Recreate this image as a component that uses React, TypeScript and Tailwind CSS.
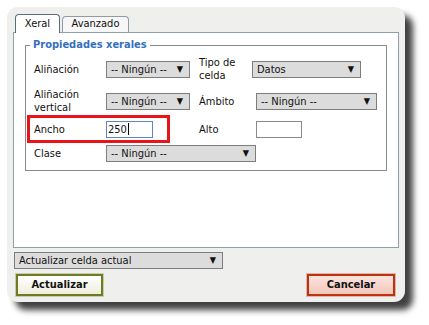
import type { ReactNode } from 'react';

const font = { fontFamily: '"DejaVu Sans Condensed", "DejaVu Sans", Tahoma, sans-serif' };

function Select({ value, className }: { value: string; className: string }) {
  return (
    <div
      className={`flex h-[17px] items-center justify-between border border-[#7d7d7d] bg-[#dcdcdc] pl-[4px] pr-[6px] text-[11px] leading-none text-[#111] ${className}`}
    >
      <span>{value}</span>
      <span className="text-[9px]">▼</span>
    </div>
  );
}

function Label({ children, className }: { children: ReactNode; className: string }) {
  return <div className={`text-[11px] leading-[13px] text-[#111] ${className}`}>{children}</div>;
}

export default function App() {
  return (
    <div className="h-[325px] w-[429px] overflow-hidden bg-white pl-[7px] pt-[7px]" style={font}>
      <div className="h-[295px] w-[398px] rounded-[11px] bg-[#efefed] px-[6px] pt-[7px] shadow-[8px_8px_6px_rgba(0,0,0,0.75)]">
        {/* Tabs */}
        <div className="ml-[2px] flex items-end gap-[2px]">
          <div className="relative z-10 -mb-px flex h-[19px] w-[45px] items-center justify-center rounded-t-[4px] border border-b-0 border-[#5d6b76] bg-white text-[11px] text-[#111]">
            Xeral
          </div>
          <div className="flex h-[16px] w-[67px] items-center justify-center rounded-t-[4px] border border-b-0 border-[#8f9ca6] bg-[#f7f7f7] text-[11px] text-[#111]">
            Avanzado
          </div>
        </div>

        {/* Panel */}
        <div className="h-[216px] w-[386px] border border-[#8fa0ab] bg-white px-[11px] pt-[5px]">
          <fieldset className="w-[362px] border border-[#8a8a8a] pb-[7px]">
            <legend className="ml-[4px] px-[3px] text-[11px] font-bold leading-[14px] text-[#3370c0]">
              Propiedades xerales
            </legend>

            <div className="flex flex-col pt-[3px]">
              <div className="flex h-[28px] items-center pl-[8px]">
                <Label className="w-[72px]">Aliñación</Label>
                <Select value="-- Ningún --" className="w-[84px]" />
                <Label className="ml-[9px] w-[53px]">
                  Tipo de
                  <br />
                  celda
                </Label>
                <Select value="Datos" className="w-[109px]" />
              </div>

              <div className="mt-[4px] flex h-[28px] items-center pl-[8px]">
                <Label className="w-[72px]">
                  Aliñación
                  <br />
                  vertical
                </Label>
                <Select value="-- Ningún --" className="w-[84px]" />
                <Label className="ml-[9px] w-[57px]">Ámbito</Label>
                <Select value="-- Ningún --" className="w-[121px]" />
              </div>

              <div className="flex h-[28px] items-center">
                <div className="ml-[1px] flex h-[28px] w-[143px] items-center border-[3px] border-[#e8141a] pl-[4px]">
                  <Label className="w-[72px]">Ancho</Label>
                  <div className="flex h-[17px] w-[47px] items-center border border-[#5b86c8] bg-white pl-[1px] text-[11px] leading-none text-[#111]">
                    250<span className="ml-px h-[12px] w-px bg-black" />
                  </div>
                </div>
                <Label className="ml-[29px] w-[57px]">Alto</Label>
                <div className="h-[17px] w-[46px] border border-[#8a8a8a] bg-white" />
              </div>

              <div className="flex h-[20px] items-center pl-[8px]">
                <Label className="w-[72px]">Clase</Label>
                <Select value="-- Ningún --" className="w-[150px]" />
              </div>
            </div>
          </fieldset>
        </div>

        {/* Bottom */}
        <Select value="Actualizar celda actual" className="ml-[1px] mt-[4px] w-[209px] pl-[3px]" />

        <div className="mt-[5px] flex items-center justify-between pl-[3px] pr-[4px]">
          <button className="flex h-[22px] w-[87px] items-center justify-center border-2 border-[#6d7c1e] bg-gradient-to-b from-white to-[#efeedd] text-[11px] font-bold text-[#111] shadow-[0_0_0_1px_#c9cbb5]">
            Actualizar
          </button>
          <button className="flex h-[22px] w-[88px] items-center justify-center border-2 border-[#c2310d] bg-gradient-to-b from-[#fbe4de] to-[#f1c7bc] text-[11px] font-bold text-[#111] shadow-[0_0_0_1px_#d9b8ae]">
            Cancelar
          </button>
        </div>
      </div>
    </div>
  );
}
